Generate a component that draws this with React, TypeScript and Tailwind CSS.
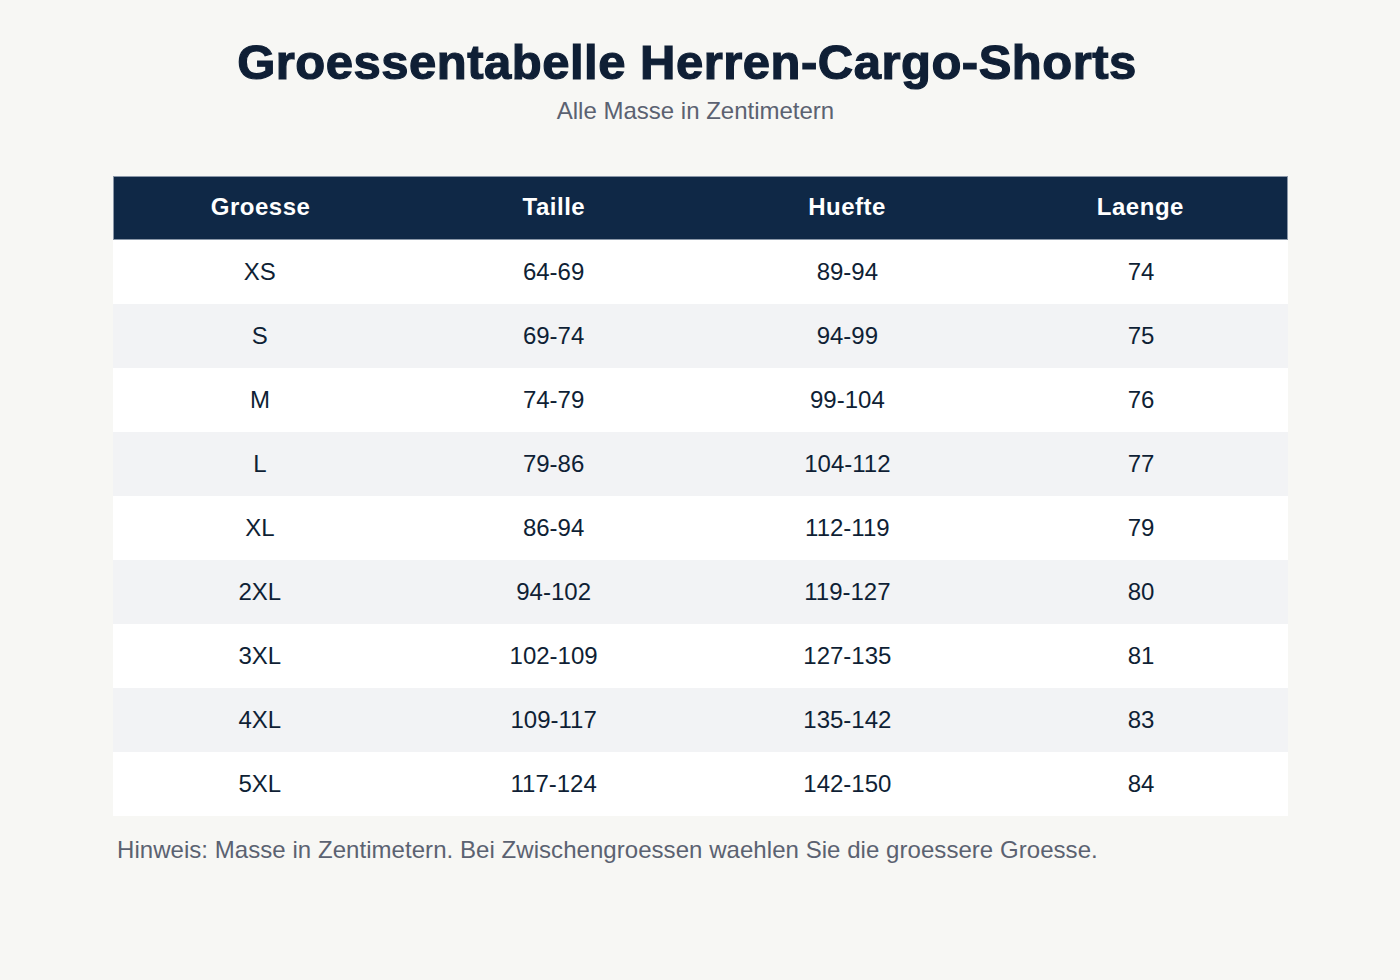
import React from "react";

const rows = [
  ["XS", "64-69", "89-94", "74"],
  ["S", "69-74", "94-99", "75"],
  ["M", "74-79", "99-104", "76"],
  ["L", "79-86", "104-112", "77"],
  ["XL", "86-94", "112-119", "79"],
  ["2XL", "94-102", "119-127", "80"],
  ["3XL", "102-109", "127-135", "81"],
  ["4XL", "109-117", "135-142", "83"],
  ["5XL", "117-124", "142-150", "84"],
];

const headers = ["Groesse", "Taille", "Huefte", "Laenge"];

export default function App() {
  return (
    <main className="min-h-[980px] w-full bg-[#f7f7f4] font-['Liberation_Sans',Arial,sans-serif]">
      <div className="pt-[34px] text-center">
        <h1 className="pr-[26px] text-[49px] font-bold leading-[56px] tracking-[0.5px] text-[#0f1f35] [-webkit-text-stroke:1.2px_#0f1f35]">
          Groessentabelle Herren-Cargo-Shorts
        </h1>
        <p className="mt-[7px] pr-[9px] text-[24px] leading-[28px] text-[#5b6271]">
          Alle Masse in Zentimetern
        </p>
      </div>

      <div className="mx-[113px] mt-[51px] w-[1175px]">
        <div className="grid h-[64px] grid-cols-4 items-center border border-[#8a97a8] bg-[#0f2846] text-[24px] font-bold tracking-[0.5px] text-white">
          {headers.map((h) => (
            <div key={h} className="pb-[2px] text-center">
              {h}
            </div>
          ))}
        </div>
        {rows.map((r, i) => (
          <div
            key={r[0]}
            className={`grid h-[64px] grid-cols-4 items-center text-[24px] text-[#0f1f35] ${
              i % 2 === 0 ? "bg-white" : "bg-[#f2f3f5]"
            }`}
          >
            {r.map((c, j) => (
              <div key={j} className="text-center">
                {c}
              </div>
            ))}
          </div>
        ))}
        <p className="mt-[20px] pl-[4px] text-[24px] leading-[28px] tracking-[0.05px] text-[#5b6271]">
          Hinweis: Masse in Zentimetern. Bei Zwischengroessen waehlen Sie die groessere Groesse.
        </p>
      </div>
    </main>
  );
}
